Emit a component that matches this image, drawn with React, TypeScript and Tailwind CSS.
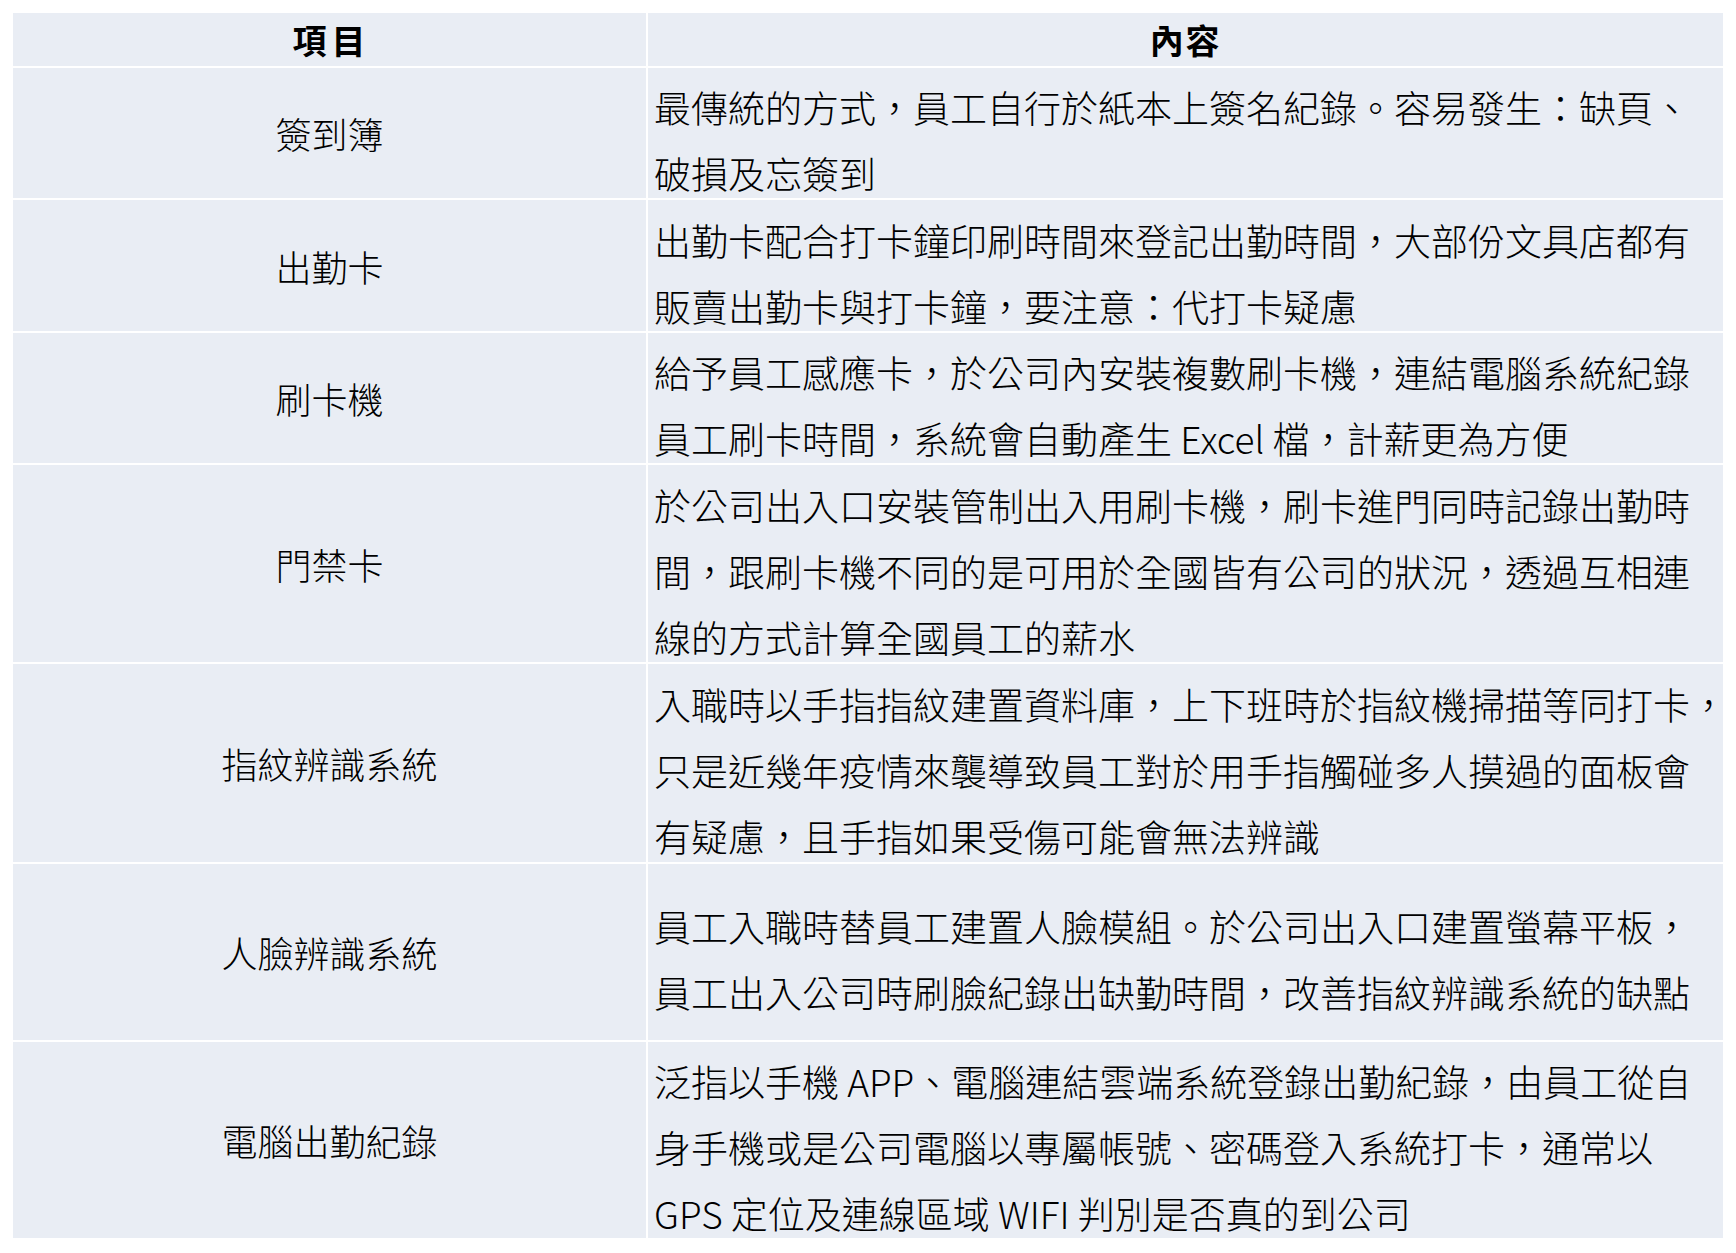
const rows: { item: string; lines: string[]; h: string }[] = [
  {
    item: "簽到簿",
    lines: ["最傳統的方式，員工自行於紙本上簽名紀錄。容易發生：缺頁、", "破損及忘簽到"],
    h: "h-[130px]",
  },
  {
    item: "出勤卡",
    lines: ["出勤卡配合打卡鐘印刷時間來登記出勤時間，大部份文具店都有", "販賣出勤卡與打卡鐘，要注意：代打卡疑慮"],
    h: "h-[131px]",
  },
  {
    item: "刷卡機",
    lines: ["給予員工感應卡，於公司內安裝複數刷卡機，連結電腦系統紀錄", "員工刷卡時間，系統會自動產生 Excel 檔，計薪更為方便"],
    h: "h-[130px]",
  },
  {
    item: "門禁卡",
    lines: [
      "於公司出入口安裝管制出入用刷卡機，刷卡進門同時記錄出勤時",
      "間，跟刷卡機不同的是可用於全國皆有公司的狀況，透過互相連",
      "線的方式計算全國員工的薪水",
    ],
    h: "h-[197px]",
  },
  {
    item: "指紋辨識系統",
    lines: [
      "入職時以手指指紋建置資料庫，上下班時於指紋機掃描等同打卡，",
      "只是近幾年疫情來襲導致員工對於用手指觸碰多人摸過的面板會",
      "有疑慮，且手指如果受傷可能會無法辨識",
    ],
    h: "h-[198px]",
  },
  {
    item: "人臉辨識系統",
    lines: ["員工入職時替員工建置人臉模組。於公司出入口建置螢幕平板，", "員工出入公司時刷臉紀錄出缺勤時間，改善指紋辨識系統的缺點"],
    h: "h-[176px]",
  },
  {
    item: "電腦出勤紀錄",
    lines: [
      "泛指以手機 APP、電腦連結雲端系統登錄出勤紀錄，由員工從自",
      "身手機或是公司電腦以專屬帳號、密碼登入系統打卡，通常以",
      "GPS 定位及連線區域 WIFI 判別是否真的到公司",
    ],
    h: "h-[196px]",
  },
];

export default function App() {
  return (
    <div className="min-h-screen bg-white pl-[13px] pt-[13px] text-black [font-family:'Noto_Sans_CJK_TC','Noto_Sans',sans-serif]">
      <div className="grid w-[1710px] grid-cols-[633px_1075px] gap-[2px]">
        <div className="flex h-[53px] items-center justify-center bg-[#e9edf4] pl-[4px] text-[34px] font-bold tracking-[0.15em]">
          項目
        </div>
        <div className="flex h-[53px] items-center justify-center bg-[#e9edf4] text-[34px] font-bold tracking-[0.05em]">
          內容
        </div>
        {rows.map((r) => (
          <div key={r.item} className="contents">
            <div className={`flex ${r.h} items-center justify-center bg-[#e9edf4] text-[36px] font-light`}>
              {r.item}
            </div>
            <div
              className={`flex ${r.h} flex-col justify-center overflow-visible whitespace-nowrap bg-[#e9edf4] pl-[6px] pt-[14px] text-[37px] font-light leading-[66px]`}
            >
              {r.lines.map((l) => (
                <div key={l}>{l}</div>
              ))}
            </div>
          </div>
        ))}
      </div>
    </div>
  );
}
